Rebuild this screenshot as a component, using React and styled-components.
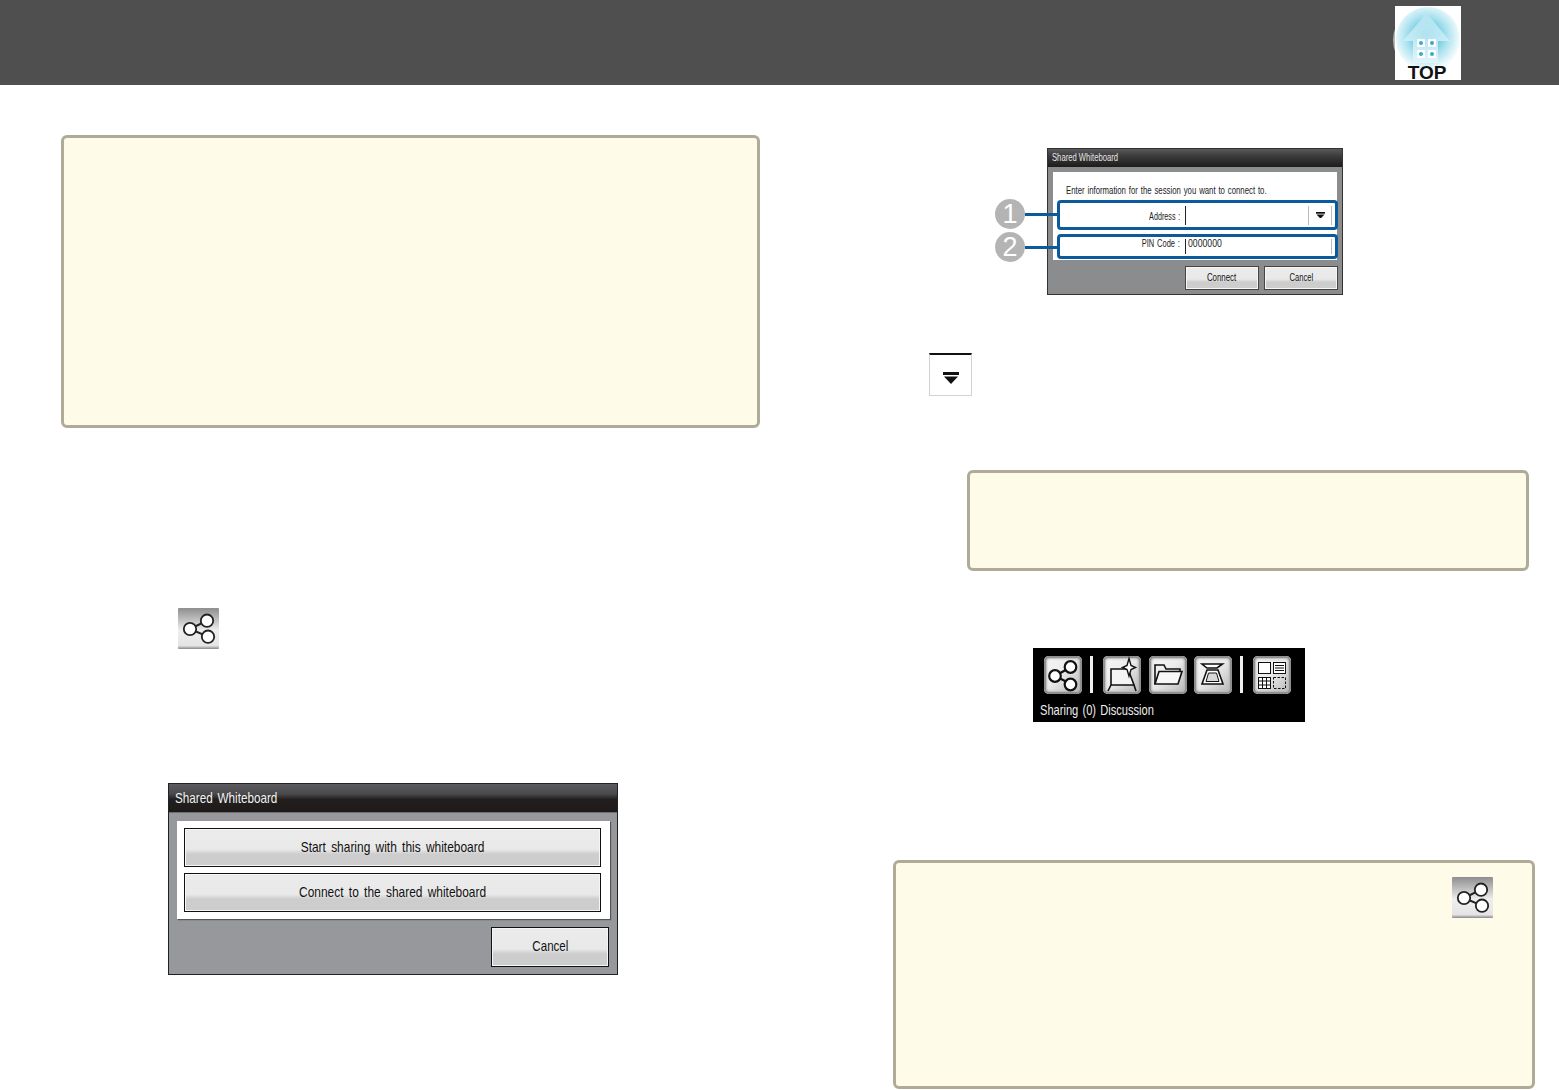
import React from 'react'
import styled, { createGlobalStyle } from 'styled-components'

const GlobalStyle = createGlobalStyle`
  html, body {
    margin: 0;
    background: #fff;
    overflow: hidden;
  }
  * { box-sizing: border-box; }
  body { font-family: "Liberation Sans", Arial, sans-serif; }
`

// Page frame
const Page = styled.div`
  width: 1559px;
  height: 1090px;
  overflow: hidden;
`
const Header = styled.header`
  height: 85px;
  background: #4f4f4f;
  display: flex;
  justify-content: flex-end;
  padding: 6px 98px 0 0;
`
const Main = styled.main`
  display: flex;
  gap: 133px;
  padding: 50px 0 0 61px;
`
const LeftColumn = styled.section`
  width: 699px;
  display: flex;
  flex-direction: column;
  align-items: flex-start;
`
const RightColumn = styled.section`
  width: 642px;
  padding-top: 13px;
  display: flex;
  flex-direction: column;
  align-items: flex-start;
`

// The screenshots use a narrow UI font, none is installed so squeeze the text
const Squeezed = styled.span`
  display: inline-block;
  white-space: nowrap;
  transform: scaleX(${p => p.$scale});
  transform-origin: ${p => p.$origin || 'center'};
`

// Note boxes
const Note = styled.div`
  width: ${p => p.$width}px;
  height: ${p => p.$height}px;
  margin: ${p => p.$margin || '0'};
  background: #fffbe9;
  border: 3px solid #b0ab98;
  border-radius: 6px;
  display: flex;
  justify-content: flex-end;
  align-items: flex-start;
  padding: ${p => p.$padding || '0'};
`

// Large dialog
const Dialog = styled.div`
  width: 450px;
  height: 192px;
  margin: 134px 0 0 107px;
  border: 1px solid #222;
  background: #97989b;
  display: flex;
  flex-direction: column;
`
const DialogTitle = styled.div`
  height: 29px;
  padding: 0 6px 2px;
  display: flex;
  align-items: center;
  color: #f2f2f2;
  font-size: 15px;
  word-spacing: 2px;
  background: linear-gradient(#5c5c60 0%, #4a4a4d 35%, #231f1f 55%, #1e1a1a 100%);
  border-bottom: 1px solid #6d6d70;
`
const ChoicePanel = styled.div`
  margin: 8px 7px 0 8px;
  height: 98px;
  padding: 7px 9px 7px 7px;
  background: #fff;
  box-shadow: 1px 1px 1px #555;
  display: flex;
  flex-direction: column;
  gap: 6px;
`
const DialogButton = styled.div`
  height: ${p => p.$height || 39}px;
  width: ${p => (p.$width ? `${p.$width}px` : 'auto')};
  padding-bottom: ${p => p.$lift ?? 2}px;
  display: flex;
  align-items: center;
  justify-content: center;
  color: #111;
  font-size: 15px;
  word-spacing: 2.5px;
  background: linear-gradient(#ebebeb 0%, #e9e9e9 55%, #cdcdcd 68%, #cdcdcd 100%);
  border: 1px solid #111;
  box-shadow: inset 0 0 0 1px #f6f6f6;
`
const DialogFooter = styled.div`
  margin-top: 8px;
  padding-right: 8px;
  display: flex;
  justify-content: flex-end;
`

// Small annotated dialog
const Figure = styled.div`
  position: relative;
  width: 296px;
  height: 147px;
  margin-left: 154px;
  border: 1px solid #333;
  background: #8b8c8e;
  display: flex;
  flex-direction: column;
`
const FigureTitle = styled.div`
  height: 18px;
  padding: 0 4px 2px;
  display: flex;
  align-items: center;
  color: #e6e6e6;
  font-size: 10.5px;
  background: linear-gradient(#58585b 0%, #3c3a3b 40%, #1f1b1b 100%);
`
const FigurePanel = styled.div`
  margin: 5px 5px 0 5px;
  height: 88px;
  background: #fff;
  padding-left: 4px;
  display: flex;
  flex-direction: column;
`
const FigureHint = styled.div`
  height: 28px;
  padding: 12px 0 0 9px;
  font-size: 10.5px;
  line-height: 12px;
  color: #222;
  word-spacing: 1px;
`
const FieldRow = styled.div`
  width: 281px;
  height: ${p => p.$height}px;
  margin-top: ${p => p.$top || 0}px;
  border: 3px solid #0a5a9c;
  border-radius: 4px;
  display: flex;
  align-items: center;
  font-size: 10px;
  color: #222;
`
const FieldLabel = styled.div`
  width: 120px;
  text-align: right;
  word-spacing: 1px;
  padding: ${p => (p.$raised ? '0 0 6px' : '2px 0 0')};
`
const FieldInput = styled.div`
  flex: 1;
  height: ${p => (p.$raised ? 15 : 19)}px;
  margin: 0 3px 0 5px;
  padding: ${p => (p.$raised ? '0 0 6px 2px' : '0 0 0 2px')};
  border-left: 1px solid #222;
  border-right: 1px solid #bbb;
  display: flex;
  align-items: center;
  justify-content: space-between;
`
const FieldArrow = styled.div`
  width: 23px;
  height: 100%;
  border-left: 1px solid #bbb;
  display: flex;
  align-items: center;
  justify-content: center;
`
const FigureFooter = styled.div`
  margin-top: 6px;
  padding-right: 4px;
  display: flex;
  justify-content: flex-end;
  gap: 5px;
`
const SmallButton = styled(DialogButton)`
  font-size: 10.5px;
  word-spacing: 0;
  border: 1px solid #444;
`
const Callout = styled.div`
  position: absolute;
  left: -53px;
  top: ${p => p.$top}px;
  width: 30px;
  height: 30px;
  border-radius: 50%;
  background: #b4b4b4;
  color: #fff;
  font-size: 27px;
  line-height: 30px;
  text-align: center;
  &::after {
    content: '';
    position: absolute;
    left: 30px;
    top: 14px;
    width: 34px;
    height: 3px;
    background: #0a5a9c;
  }
`

// Icons and tool tiles
const Tile = styled.div`
  width: ${p => p.$size || 38}px;
  height: ${p => p.$size || 38}px;
  flex: none;
  border-radius: ${p => (p.$square ? 1 : 5)}px;
  margin: ${p => p.$margin || '0'};
  background: ${p => (p.$square
    ? 'linear-gradient(#8e8e8e 0%, #b9b9b9 25%, #efefef 55%, #e4e4e4 92%, #888 100%)'
    : 'linear-gradient(135deg, #f6f6f6 0%, #ececec 45%, #b4b4b4 100%)')};
  box-shadow: ${p => (p.$square ? 'none' : 'inset 0 0 0 2px #8f8f8f, inset 0 0 2px 3px #b5b5b5')};
  svg { display: block; width: 100%; height: 100%; }
`
const DropdownBox = styled.div`
  width: 43px;
  height: 43px;
  margin: 58px 0 0 36px;
  border: 1px solid #d2d2d2;
  border-top: 2px solid #111;
  display: flex;
  align-items: center;
  justify-content: center;
  padding-top: 6px;
`
const Toolbar = styled.div`
  width: 272px;
  height: 74px;
  margin: 77px 0 0 140px;
  padding: 8px 11px 0;
  background: #000;
`
const ToolRow = styled.div`
  display: flex;
  gap: 7.5px;
  align-items: stretch;
`
const ToolDivider = styled.div`
  width: 3px;
  height: 37px;
  margin: 0 2.5px 0 .5px;
  background: #f0f0f0;
`
const ToolLabel = styled.div`
  margin: 7px 0 0 -4px;
  color: #eee;
  font-size: 15px;
  word-spacing: 1.5px;
`

function TopLogo() {
  return (
    <svg width="68" height="74" viewBox="0 0 68 74" style={{ overflow: 'visible' }}>
      <defs>
        <radialGradient id="glow" cx="48%" cy="46%" r="52%">
          <stop offset="0%" stopColor="#1fa3cc" />
          <stop offset="30%" stopColor="#63c4de" />
          <stop offset="62%" stopColor="#abe2ef" />
          <stop offset="100%" stopColor="#f2fbfd" />
        </radialGradient>
        <linearGradient id="house" x1="0" y1="0" x2="0" y2="1">
          <stop offset="0%" stopColor="#b5e6f2" />
          <stop offset="100%" stopColor="#e4f6fa" />
        </linearGradient>
      </defs>
      <circle cx="34" cy="34" r="34" fill="#b4b4b4" />
      <rect x="2" y="0" width="66" height="74" fill="#fff" />
      <circle cx="35" cy="33" r="32" fill="url(#glow)" />
      <path d="M33.5 7 L57 35 H45 V57 H20 V35 H10 Z" fill="url(#house)" opacity=".85" />
      <g fill="#fff">
        <rect x="24" y="33" width="8" height="8" rx="1" />
        <rect x="35" y="33" width="8" height="8" rx="1" />
        <rect x="24" y="44" width="8" height="8" rx="1" />
        <rect x="35" y="44" width="8" height="8" rx="1" />
      </g>
      <g fill="#35aacf">
        <circle cx="28" cy="37" r="2" />
        <circle cx="39" cy="37" r="2" />
        <circle cx="28" cy="48" r="2" />
        <circle cx="39" cy="48" r="2" />
      </g>
      <text
        x="34" y="72.5" textAnchor="middle" fontSize="19" fontWeight="700"
        fontFamily="'Liberation Sans', sans-serif" fill="#111"
      >TOP</text>
    </svg>
  )
}

function ShareGlyph() {
  return (
    <svg viewBox="0 0 41 41">
      <path d="M12 21 L29 12.7 M12 21 L30 28.7" stroke="#222" strokeWidth="2" fill="none" />
      <g fill="#fff" stroke="#222" strokeWidth="1.8">
        <circle cx="12" cy="21" r="6.2" />
        <circle cx="29" cy="12.7" r="6.2" />
        <circle cx="30" cy="28.7" r="6.2" />
      </g>
    </svg>
  )
}

function ShareTool() {
  return (
    <svg viewBox="0 0 38 38">
      <path d="M11 20 L27 11 M11 20 L27 28" stroke="#111" strokeWidth="2.2" fill="none" />
      <g fill="#fff" stroke="#111" strokeWidth="2.2">
        <circle cx="11" cy="20" r="5.8" />
        <circle cx="26.5" cy="11" r="5.8" />
        <circle cx="26.5" cy="28.5" r="5.8" />
      </g>
    </svg>
  )
}

function BoardTool() {
  return (
    <svg viewBox="0 0 38 38" fill="none" stroke="#111" strokeWidth="1.6">
      <path d="M8 13 H25 L31 29 H8 Z" fill="#f4f4f4" />
      <path d="M8 29 L5 35 M31 29 L33 35" />
      <path d="M26 2.5 L28 9.5 L32.5 11.5 L28 13.5 L26 20 L24 13.5 L19.5 11.5 L24 9.5 Z" fill="#fff" strokeWidth="1.4" />
    </svg>
  )
}

function FolderTool() {
  return (
    <svg viewBox="0 0 38 38" fill="none" stroke="#111" strokeWidth="1.6">
      <path d="M6 28 V9 H15 L17 13 H31 V16" />
      <path d="M6 28 L10 15.5 H33 L29 28 Z" fill="#f7f7f7" />
    </svg>
  )
}

function CameraTool() {
  return (
    <svg viewBox="0 0 38 38" fill="none" stroke="#111" strokeWidth="1.6">
      <path d="M8 8 H28.5 L23 12 H13 Z" fill="#fff" />
      <path d="M13 14 H24 L29 28 H8 Z" fill="#fff" />
      <path d="M14.5 17 H22.5 L25 25.5 H12 Z" fill="#d8d8d8" strokeWidth="1" />
    </svg>
  )
}

function LayoutTool() {
  return (
    <svg viewBox="0 0 38 38" fill="none" stroke="#111" strokeWidth="1">
      <rect x="5.5" y="6.5" width="12" height="11" fill="#fff" />
      <rect x="20.5" y="6.5" width="12" height="11" fill="#fff" />
      <path d="M22 9.5 H31 M22 12 H31 M22 14.5 H31" />
      <rect x="5.5" y="21.5" width="12" height="11" fill="#fff" />
      <path d="M9.5 21.5 V32.5 M13.5 21.5 V32.5 M5.5 25 H17.5 M5.5 29 H17.5" />
      <rect x="20.5" y="21.5" width="12" height="11" strokeDasharray="2.5 1.5" />
    </svg>
  )
}

function ArrowGlyph({ size }) {
  return (
    <svg width={size} height={size * 0.75} viewBox="0 0 16 12">
      <rect x="0" y="0" width="16" height="3" fill="#111" />
      <path d="M1 4.5 H15 L8 12 Z" fill="#111" />
    </svg>
  )
}

export default function App() {
  return (
    <>
      <GlobalStyle />
      <Page>
        <Header>
          <TopLogo />
        </Header>
        <Main>
          <LeftColumn>
            <Note $width={699} $height={293} />
            <Tile $square $size={41} $margin="180px 0 0 117px"><ShareGlyph /></Tile>
            <Dialog>
              <DialogTitle>
                <Squeezed $scale={0.78} $origin="left">Shared Whiteboard</Squeezed>
              </DialogTitle>
              <ChoicePanel>
                <DialogButton><Squeezed $scale={0.795}>Start sharing with this whiteboard</Squeezed></DialogButton>
                <DialogButton><Squeezed $scale={0.795}>Connect to the shared whiteboard</Squeezed></DialogButton>
              </ChoicePanel>
              <DialogFooter>
                <DialogButton $width={118} $height={40} $lift={4}><Squeezed $scale={0.77}>Cancel</Squeezed></DialogButton>
              </DialogFooter>
            </Dialog>
          </LeftColumn>
          <RightColumn>
            <Figure>
              <Callout $top={50}>1</Callout>
              <Callout $top={83}>2</Callout>
              <FigureTitle>
                <Squeezed $scale={0.73} $origin="left">Shared Whiteboard</Squeezed>
              </FigureTitle>
              <FigurePanel>
                <FigureHint>
                  <Squeezed $scale={0.74} $origin="left">Enter information for the session you want to connect to.</Squeezed>
                </FigureHint>
                <FieldRow $height={30}>
                  <FieldLabel><Squeezed $scale={0.72} $origin="right">Address :</Squeezed></FieldLabel>
                  <FieldInput>
                    <span />
                    <FieldArrow><ArrowGlyph size={9} /></FieldArrow>
                  </FieldInput>
                </FieldRow>
                <FieldRow $height={25} $top={4}>
                  <FieldLabel $raised><Squeezed $scale={0.75} $origin="right">PIN Code :</Squeezed></FieldLabel>
                  <FieldInput $raised>
                    <Squeezed $scale={0.87} $origin="left">0000000</Squeezed>
                  </FieldInput>
                </FieldRow>
              </FigurePanel>
              <FigureFooter>
                <SmallButton $width={74} $height={24}><Squeezed $scale={0.75}>Connect</Squeezed></SmallButton>
                <SmallButton $width={74} $height={24}><Squeezed $scale={0.72}>Cancel</Squeezed></SmallButton>
              </FigureFooter>
            </Figure>
            <DropdownBox><ArrowGlyph size={16} /></DropdownBox>
            <Note $width={562} $height={101} $margin="74px 0 0 74px" />
            <Toolbar>
              <ToolRow>
                <Tile><ShareTool /></Tile>
                <ToolDivider />
                <Tile><BoardTool /></Tile>
                <Tile><FolderTool /></Tile>
                <Tile><CameraTool /></Tile>
                <ToolDivider />
                <Tile><LayoutTool /></Tile>
              </ToolRow>
              <ToolLabel>
                <Squeezed $scale={0.74} $origin="left">Sharing (0) Discussion</Squeezed>
              </ToolLabel>
            </Toolbar>
            <Note $width={642} $height={229} $margin="138px 0 0 0" $padding="14px 39px 0 0">
              <Tile $square $size={41}><ShareGlyph /></Tile>
            </Note>
          </RightColumn>
        </Main>
      </Page>
    </>
  )
}
